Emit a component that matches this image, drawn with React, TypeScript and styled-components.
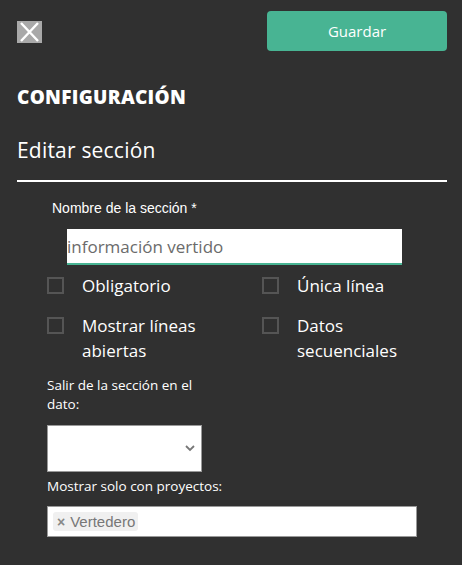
import React from 'react';
import styled, { createGlobalStyle } from 'styled-components';

const GlobalStyle = createGlobalStyle`
  html, body {
    margin: 0;
    padding: 0;
    background: #303030;
  }
  * {
    box-sizing: border-box;
  }
`;

const App: React.FC = () => {
  return (
    <>
      <GlobalStyle />
      <Panel>
        <TopBar>
          <CloseButton aria-label="Cerrar">
            <svg width="25" height="22" viewBox="0 0 25 22">
              <rect width="25" height="22" fill="#a9a9a9" />
              <path d="M4 2 L21 20 M21 2 L4 20" stroke="#fff" strokeWidth="2.4" />
            </svg>
          </CloseButton>
          <SaveButton>Guardar</SaveButton>
        </TopBar>

        <Title>CONFIGURACIÓN</Title>
        <Subtitle>Editar sección</Subtitle>
        <Divider />

        <Form>
          <NameLabel>Nombre de la sección *</NameLabel>
          <NameInput defaultValue="información vertido" />

          <CheckGrid>
            <CheckItem>
              <CheckBox />
              <CheckLabel>Obligatorio</CheckLabel>
            </CheckItem>
            <CheckItem>
              <CheckBox />
              <CheckLabel>Única línea</CheckLabel>
            </CheckItem>
            <CheckItem>
              <CheckBox />
              <CheckLabel>Mostrar líneas abiertas</CheckLabel>
            </CheckItem>
            <CheckItem>
              <CheckBox />
              <CheckLabel>Datos secuenciales</CheckLabel>
            </CheckItem>
          </CheckGrid>

          <FieldLabel width="160px">Salir de la sección en el dato:</FieldLabel>
          <SelectBox>
            <svg width="10" height="7" viewBox="0 0 10 7">
              <path d="M1 1 L5 5 L9 1" stroke="#777" strokeWidth="1.8" fill="none" />
            </svg>
          </SelectBox>

          <FieldLabel gap="5px">Mostrar solo con proyectos:</FieldLabel>
          <MultiSelect>
            <Chip>
              <ChipRemove>×</ChipRemove>
              Vertedero
            </Chip>
          </MultiSelect>
        </Form>
      </Panel>
    </>
  );
};

export default App;

const Panel = styled.div`
  width: 462px;
  height: 565px;
  background: #303030;
  padding: 11px 15px 0 17px;
  font-family: 'Open Sans', sans-serif;
  color: #fff;
`;

const TopBar = styled.div`
  display: flex;
  justify-content: space-between;
  align-items: center;
`;

const CloseButton = styled.div`
  display: flex;
  width: 25px;
  height: 22px;
  margin-top: 1px;
`;

const SaveButton = styled.button`
  width: 180px;
  height: 40px;
  border: none;
  border-radius: 4px;
  background: #48b493;
  color: #fff;
  font-family: 'Open Sans', sans-serif;
  font-size: 15px;
  font-weight: 500;
`;

const Title = styled.h1`
  margin: 33px 0 0;
  font-size: 19px;
  line-height: 26px;
  font-weight: 800;
  letter-spacing: 0.3px;
`;

const Subtitle = styled.h2`
  margin: 26px 0 0;
  font-size: 21px;
  line-height: 28px;
  font-weight: 400;
  letter-spacing: 0.2px;
`;

const Divider = styled.div`
  height: 2px;
  background: #fff;
  margin-top: 16px;
`;

const Form = styled.div`
  display: flex;
  flex-direction: column;
  padding: 0 30px 0 30px;
`;

const NameLabel = styled.label`
  margin: 18px 0 0 5px;
  font-family: 'Liberation Sans', Arial, sans-serif;
  font-size: 14px;
  line-height: 16px;
`;

const NameInput = styled.input`
  margin: 13px 15px 0 20px;
  height: 36px;
  border: none;
  border-bottom: 2px solid #48b493;
  padding: 0;
  background: #fff;
  color: #6b6b6b;
  font-family: 'Open Sans', sans-serif;
  font-size: 17px;
  outline: none;
`;

const CheckGrid = styled.div`
  display: grid;
  grid-template-columns: 215px 1fr;
  row-gap: 18px;
  margin-top: 11px;
`;

const CheckItem = styled.div`
  display: flex;
  align-items: flex-start;
  gap: 18px;
`;

const CheckBox = styled.span`
  flex: none;
  width: 17px;
  height: 17px;
  margin-top: 1px;
  border: 2px solid #555;
`;

const CheckLabel = styled.span`
  font-size: 17px;
  line-height: 25px;
  margin-top: -3px;
  max-width: 130px;
  font-weight: 500;
`;

const FieldLabel = styled.label<{ width?: string; gap?: string }>`
  width: ${props => props.width || 'auto'};
  margin-top: ${props => props.gap || '13px'};
  font-size: 13.5px;
  line-height: 19px;
  font-weight: 500;
`;

const SelectBox = styled.div`
  width: 155px;
  height: 47px;
  margin-top: 11px;
  background: #fff;
  border: 1px solid #999;
  display: flex;
  align-items: center;
  justify-content: flex-end;
  padding-right: 6px;
`;

const MultiSelect = styled.div`
  margin-top: 10px;
  width: 370px;
  height: 31px;
  background: #fff;
  border: 1px solid #999;
  display: flex;
  align-items: center;
  padding-left: 5px;
`;

const Chip = styled.span`
  display: flex;
  align-items: center;
  height: 19px;
  padding: 0 3px 0 4px;
  border-radius: 3px;
  background: #f0f0f0;
  color: #777;
  font-family: 'Liberation Sans', Arial, sans-serif;
  font-size: 15px;
`;

const ChipRemove = styled.span`
  font-size: 14px;
  font-weight: bold;
  color: #888;
  margin-right: 5px;
`;
